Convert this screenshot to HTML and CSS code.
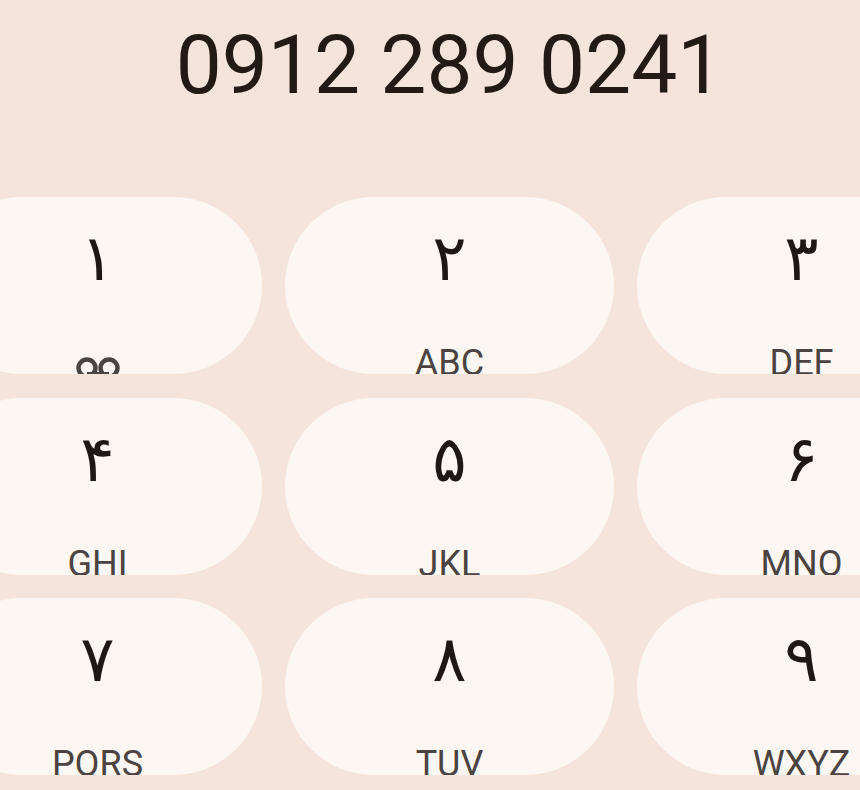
FILE: index.html
```html
<!DOCTYPE html>
<html lang="fa">
<head>
<meta charset="utf-8">
<title>Dialer</title>
<link rel="stylesheet" href="styles.css">
</head>
<body>
<div class="screen">
  <div class="number">0912 289 0241</div>
  <div class="pad">
    <div class="key"><span class="digit">۱</span><span class="label"><svg class="vm" width="48" height="30" viewBox="0 0 48 30"><circle cx="13" cy="13" r="8.5" fill="none" stroke="#4a4341" stroke-width="4.5"/><circle cx="35" cy="13" r="8.5" fill="none" stroke="#4a4341" stroke-width="4.5"/><line x1="13" y1="19.3" x2="35" y2="19.3" stroke="#4a4341" stroke-width="4.5"/></svg></span></div>
    <div class="key"><span class="digit">۲</span><span class="label">ABC</span></div>
    <div class="key"><span class="digit">۳</span><span class="label">DEF</span></div>
    <div class="key"><span class="digit">۴</span><span class="label">GHI</span></div>
    <div class="key"><span class="digit">۵</span><span class="label">JKL</span></div>
    <div class="key"><span class="digit">۶</span><span class="label">MNO</span></div>
    <div class="key"><span class="digit">۷</span><span class="label">PQRS</span></div>
    <div class="key"><span class="digit">۸</span><span class="label">TUV</span></div>
    <div class="key"><span class="digit">۹</span><span class="label">WXYZ</span></div>
  </div>
</div>
</body>
</html>
```
FILE: styles.css
```css
html, body {
  margin: 0;
  padding: 0;
  background: #f4e4dc;
  overflow: hidden;
}
.screen {
  width: 1033px;
  margin-left: -67px;
  height: 790px;
  display: flex;
  flex-direction: column;
  align-items: center;
}
.number {
  font-family: Roboto, "Noto Sans", sans-serif;
  font-size: 82px;
  color: #231a15;
  line-height: 1;
  padding-top: 24px;
  height: 170px;
  box-sizing: border-box;
  flex-shrink: 0;
}
.pad {
  display: grid;
  grid-template-columns: repeat(3, 329px);
  grid-auto-rows: 177px;
  column-gap: 23px;
  row-gap: 23.5px;
  margin-top: 27px;
}
.key {
  background: #fdf7f3;
  border-radius: 89px;
  overflow: hidden;
  display: flex;
  flex-direction: column;
  align-items: center;
}
.digit {
  font-family: "DejaVu Sans", sans-serif;
  font-size: 64px;
  color: #1d1816;
  line-height: 1;
  margin-top: 29px;
  height: 119px;
  flex-shrink: 0;
}
.label {
  font-family: Roboto, "Liberation Sans", sans-serif;
  font-size: 36px;
  color: #4a4341;
  line-height: 1;
  flex-shrink: 0;
}
.vm {
  display: block;
  margin-top: 10px;
}
```
